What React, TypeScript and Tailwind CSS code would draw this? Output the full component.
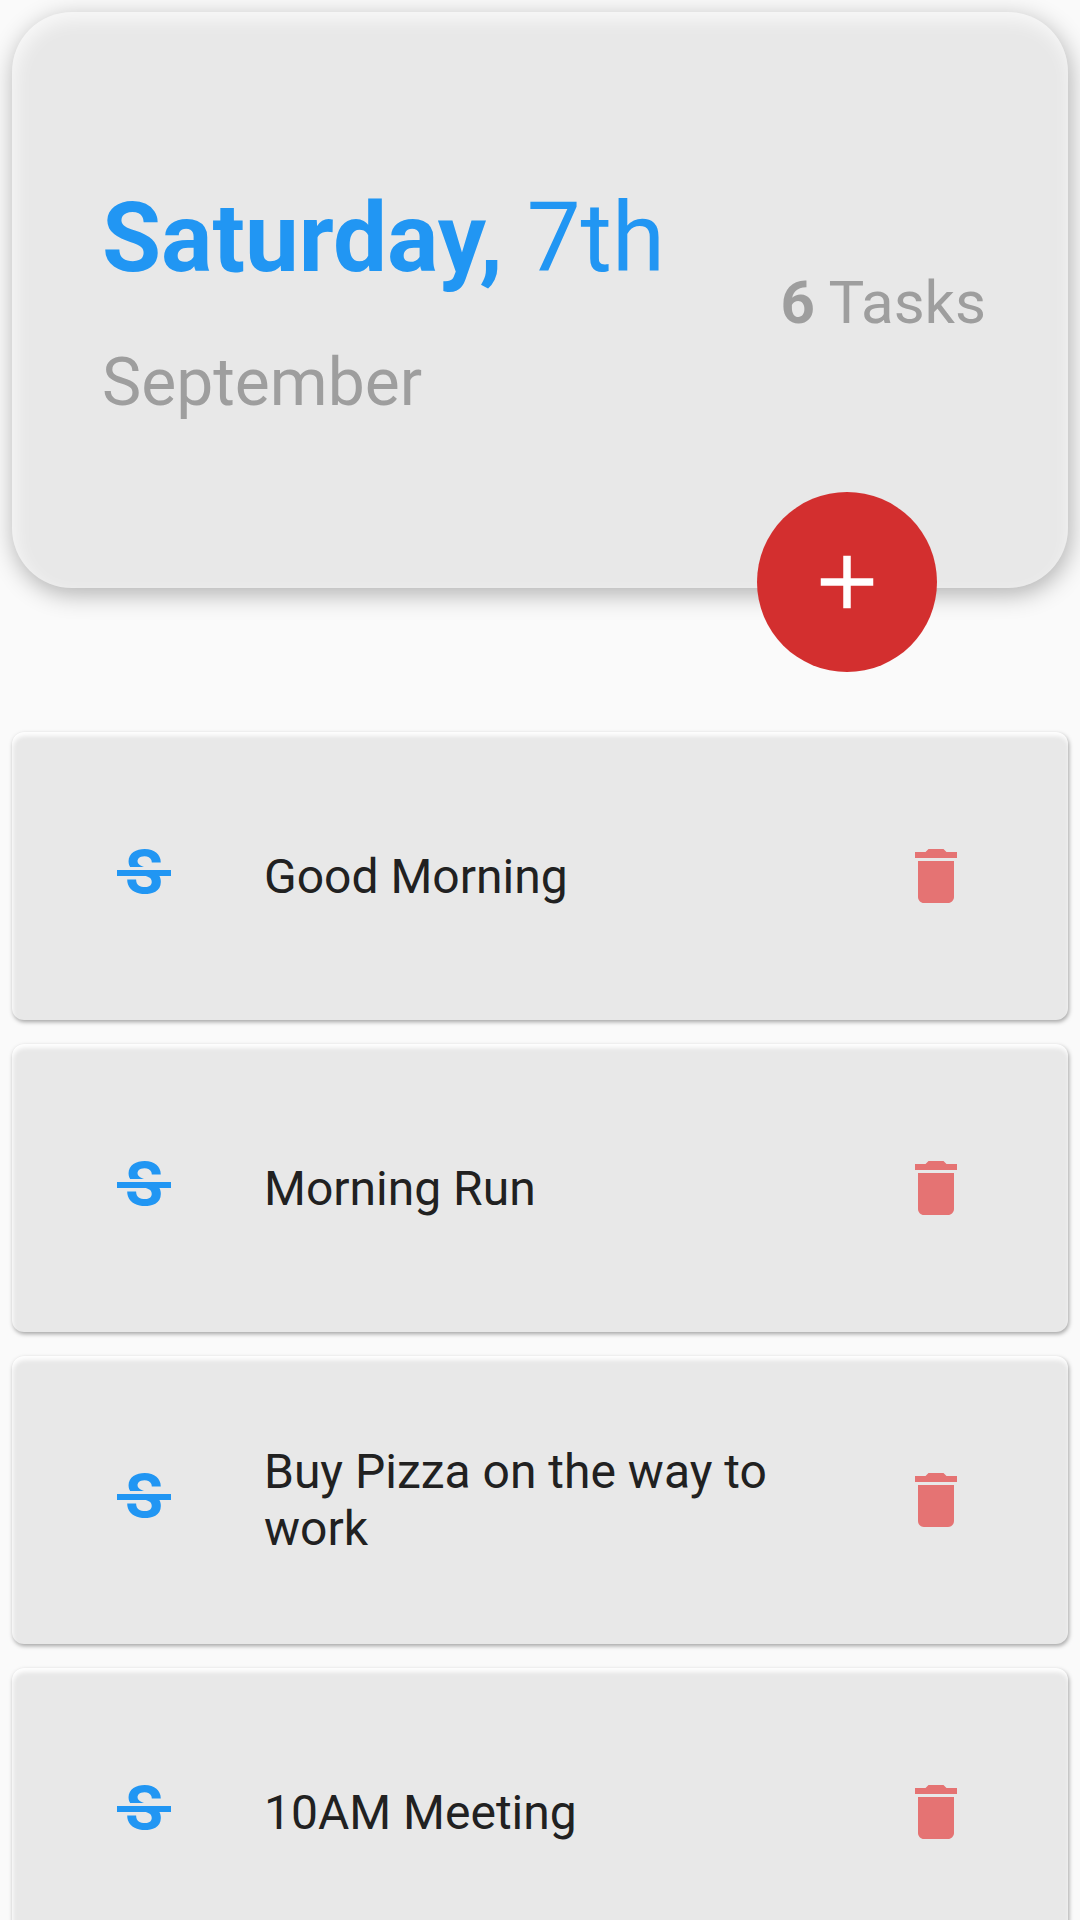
import React from "react";
import { MdAdd, MdDelete, MdStrikethroughS } from "react-icons/md";

const tasks = ["Good Morning", "Morning Run", "Buy Pizza on the way to work", "10AM Meeting"];

export default function App() {
  return (
    <main className="h-screen overflow-hidden bg-[#fafafa] px-3 pt-3 font-[Roboto,sans-serif]">
      <header className="relative flex h-[576px] items-center justify-between rounded-[60px] bg-[#e8e8e8] pr-[82px] pl-[90px] shadow-[2px_6px_24px_rgba(0,0,0,0.3),inset_3px_8px_18px_rgba(255,255,255,0.7)]">
        <div className="pt-1">
          <h1 className="text-[96px] leading-[112px] font-bold text-[#2196f3]">
            Saturday, <span className="font-normal">7th</span>
          </h1>
          <p className="mt-[50px] text-[66px] leading-[78px] text-[#9e9e9e]">September</p>
        </div>
        <p className="pt-1.5 text-[60px] leading-[72px] text-[#9e9e9e]">
          <b>6</b> Tasks
        </p>
        <button
          type="button"
          aria-label="Add task"
          className="absolute right-[131px] -bottom-[84px] flex size-[180px] items-center justify-center rounded-full bg-[#d32f2f] text-white"
        >
          <MdAdd className="size-[90px]" />
        </button>
      </header>
      <ul className="mt-36 flex flex-col gap-6">
        {tasks.map((task) => (
          <li
            key={task}
            className="flex h-72 shrink-0 items-center rounded-xl bg-[#e8e8e8] pr-24 pl-24 shadow-[1px_2px_4px_rgba(0,0,0,0.35),inset_1px_4px_4px_rgba(255,255,255,0.95)]"
          >
            <button type="button" aria-label={"Strike " + task} className="shrink-0 text-[#2196f3]">
              <MdStrikethroughS className="size-[72px]" />
            </button>
            <span className="ml-[84px] flex-1 pr-24 text-[48px] leading-[57px] text-[#212121]">{task}</span>
            <button type="button" aria-label={"Delete " + task} className="shrink-0 text-[#e57373]">
              <MdDelete className="size-[72px]" />
            </button>
          </li>
        ))}
      </ul>
    </main>
  );
}
